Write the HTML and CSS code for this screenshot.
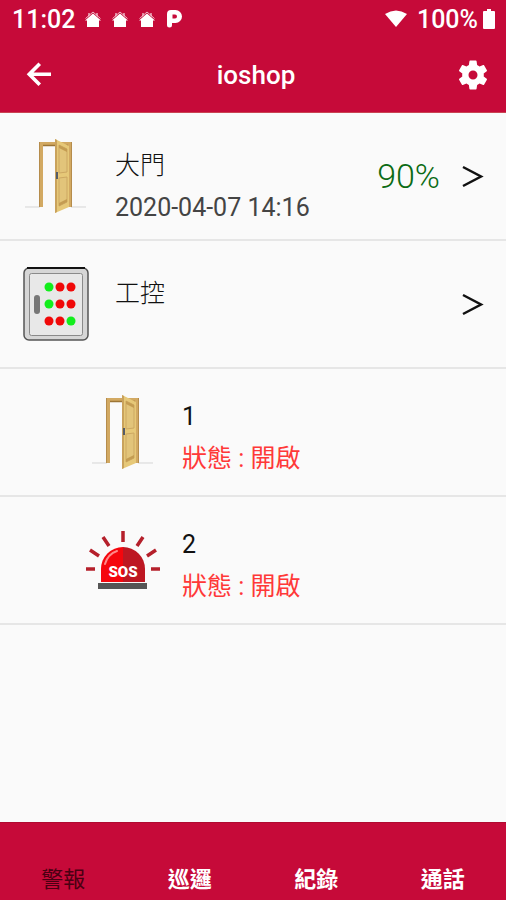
FILE: index.html
```html
<!DOCTYPE html>
<html lang="zh-Hant">
<head>
    <meta charset="UTF-8">
    <meta name="viewport" content="width=device-width, initial-scale=1.0">
    <title>ioshop</title>
    <link rel="stylesheet" href="styles.css">
</head>
<body>
    <!-- shared drawings -->
    <svg class="sprite" aria-hidden="true">
        <symbol id="house" viewBox="0 0 18 18">
            <path d="M9 3.500 17 10.500H15V17H3V10.500H1Z" fill="currentColor"/>
            <path d="M1.500 8.500 9 2 16.500 8.500" fill="none" stroke="currentColor" opacity=".7"/>
            <path d="M4 3h2v2l-2 2zM12 3h2v4l-2-2z" fill="currentColor" opacity=".5"/>
        </symbol>
        <symbol id="door" viewBox="0 0 80 80">
            <path d="M9 71H24M55 71H70" stroke="#d5d5d5"/>
            <path d="M23 6H56V71H52V10H27V71H23Z" fill="#d2a962"/>
            <path d="M23.500 6V71M55.500 6V71" stroke="#b58c4c"/>
            <path d="M27 9.500H52" stroke="#9c7535" stroke-width="1.500"/>
            <path d="M39 3 53 10V71L39 77Z" fill="#e6c878"/>
            <path d="M39 3 41 4V76L39 77Z" fill="#c9a25c"/>
            <path d="M43 9 51 13V36L43 37ZM43 42 51 41V66L43 70Z" fill="#e2c47a" stroke="#cda862"/>
            <path d="M43 9 51 13V16L43 12ZM43 70 51 66V63L43 67Z" fill="#c49c52"/>
            <rect x="40" y="36" width="2" height="7" fill="#555b66"/>
        </symbol>
        <symbol id="chevron" viewBox="0 0 24 24">
            <path d="M3 3 21 12.500 3 22" fill="none" stroke="#111" stroke-width="2.500"/>
        </symbol>
    </svg>

    <div class="status-bar">
        <span>11:02</span>
        <div class="notifications">
            <svg width="18" height="18"><use href="#house"/></svg>
            <svg width="18" height="18"><use href="#house"/></svg>
            <svg width="18" height="18"><use href="#house"/></svg>
            <svg width="18" height="18" viewBox="0 0 18 18">
                <path d="M6 0H10.500A6.500 6.500 0 0 1 10.500 13H7V15Q7 17.500 4.500 17.500T2 15V4Q2 0 6 0Z" fill="currentColor"/>
                <path d="M7.500 4.500H10a2 2 0 0 1 0 4H7.500Z" fill="#c60a39"/>
            </svg>
        </div>
        <div class="signals">
            <svg width="24" height="18" viewBox="0 0 24 18"><path d="M1 4Q12-3 23 4L12 17Z" fill="currentColor"/></svg>
            <span>100%</span>
            <svg class="battery" width="12" height="20" viewBox="0 0 12 20"><path d="M4 0H8V2H11Q12 2 12 3V19Q12 20 11 20H1Q0 20 0 19V3Q0 2 1 2H4Z" fill="currentColor"/></svg>
        </div>
    </div>

    <header class="app-bar">
        <button class="icon-btn" aria-label="返回">
            <svg width="36" height="36" viewBox="0 0 24 24"><path d="M20 11.500H6M12.500 4.500 5.500 11.500 12.500 18.500" fill="none" stroke="currentColor" stroke-width="2.400"/></svg>
        </button>
        <h1>ioshop</h1>
        <button class="icon-btn" aria-label="設定">
            <svg width="36" height="36" viewBox="0 0 24 24"><path fill="currentColor" d="M19.140 12.940c.04-.3.06-.61.06-.94 0-.32-.02-.64-.07-.94l2.030-1.580c.18-.14.23-.41.12-.61l-1.920-3.320c-.12-.22-.37-.29-.59-.22l-2.390.96c-.5-.38-1.030-.7-1.620-.94L14.400 2.810c-.04-.24-.24-.41-.48-.41h-3.840c-.24 0-.43.17-.47.41L9.250 5.350c-.59.24-1.130.57-1.620.94L5.240 5.330c-.22-.08-.47 0-.59.22L2.740 8.870c-.12.21-.08.47.12.61l2.030 1.580c-.05.3-.09.63-.09.94s.02.64.07.94l-2.030 1.580c-.18.14-.23.41-.12.61l1.920 3.320c.12.22.37.29.59.22l2.390-.96c.5.38 1.030.7 1.620.94l.36 2.540c.05.24.24.41.48.41h3.840c.24 0 .44-.17.47-.41l.36-2.540c.59-.24 1.130-.56 1.620-.94l2.390.96c.22.08.47 0 .59-.22l1.920-3.320c.12-.22.07-.47-.12-.61ZM12 15a3 3 0 1 1 0-6 3 3 0 0 1 0 6Z"/></svg>
        </button>
    </header>

    <main>
        <ul class="device-list">
            <li class="device">
                <svg class="device-icon"><use href="#door"/></svg>
                <div class="device-text">
                    <p>大門</p>
                    <p class="time">2020-04-07 14:16</p>
                </div>
                <span class="level">90%</span>
                <a class="more" href="#" aria-label="大門"><svg width="24" height="24"><use href="#chevron"/></svg></a>
            </li>
            <li class="device">
                <svg class="device-icon" viewBox="0 0 80 80">
                    <rect x="8" y="4" width="64" height="72" rx="5" fill="#d6d6d6" stroke="#555" stroke-width="1.500"/>
                    <path d="M11 4H69" stroke="#111" stroke-width="2"/>
                    <rect x="13.500" y="9.500" width="53" height="62" rx="2" fill="#e8e8e8" stroke="#8a8a8a"/>
                    <rect x="18" y="31" width="6" height="19" rx="3" fill="#777"/>
                    <g fill="#f00808">
                        <circle cx="44" cy="23" r="4.500"/>
                        <circle cx="55" cy="23" r="4.500"/>
                        <circle cx="44" cy="40" r="4.500"/>
                        <circle cx="55" cy="40" r="4.500"/>
                        <circle cx="33" cy="57" r="4.500"/>
                        <circle cx="44" cy="57" r="4.500"/>
                    </g>
                    <g fill="#12ee1c">
                        <circle cx="33" cy="23" r="4.500"/>
                        <circle cx="33" cy="40" r="4.500"/>
                        <circle cx="55" cy="57" r="4.500"/>
                    </g>
                </svg>
                <div class="device-text">
                    <p>工控</p>
                </div>
                <a class="more" href="#" aria-label="工控"><svg width="24" height="24"><use href="#chevron"/></svg></a>
            </li>
            <li class="device sub">
                <svg class="device-icon"><use href="#door"/></svg>
                <div class="device-text">
                    <p class="name">1</p>
                    <p class="alert">狀態 : 開啟</p>
                </div>
            </li>
            <li class="device sub">
                <svg class="device-icon" viewBox="0 0 80 80">
                    <path d="M40 11V22M20 17 26 26M60 17 54 26M7 30 16 36M73 30 64 36M3 49H12M68 49H77" stroke="#b5202b" stroke-width="3.500"/>
                    <path d="M18 62V49A22 22 0 0 1 40 27V62Z" fill="#f5060d"/>
                    <path d="M40 27A22 22 0 0 1 62 49V62H40Z" fill="#bd1722"/>
                    <path d="M22 44Q25 34 34 31" fill="none" stroke="#ff8a8a" stroke-width="2" stroke-linecap="round"/>
                    <rect x="15" y="63" width="49" height="6" fill="#555"/>
                    <text class="sos" x="40" y="57" text-anchor="middle">SOS</text>
                </svg>
                <div class="device-text">
                    <p class="name">2</p>
                    <p class="alert">狀態 : 開啟</p>
                </div>
            </li>
        </ul>
    </main>

    <nav class="tabs">
        <a class="active" href="#">警報</a>
        <a href="#">巡邏</a>
        <a href="#">紀錄</a>
        <a href="#">通話</a>
    </nav>
</body>
</html>
```
FILE: styles.css
```css
* {
    box-sizing: border-box;
}
body {
    display: flex;
    flex-direction: column;
    min-height: 100vh;
    margin: 0;
    font-family: Roboto, "Noto Sans CJK TC", sans-serif;
    font-size: 25px;
    color: #222;
    background-color: #fafafa;
}
.sprite {
    display: none;
}
svg {
    display: block;
    flex-shrink: 0;
}
.status-bar {
    display: flex;
    align-items: center;
    height: 38px;
    padding: 0 11px 0 12px;
    font-weight: 500;
    color: #fff;
    background-color: #c60a39;
}
.notifications {
    display: flex;
    gap: 9px;
    margin-left: 9px;
}
.signals {
    display: flex;
    align-items: center;
    margin-left: auto;
}
.signals span {
    margin: 0 5px 0 9px;
}
.app-bar {
    display: flex;
    align-items: center;
    justify-content: space-between;
    height: 75px;
    padding: 0 15px;
    color: #fff;
    background-color: #c60a39;
    border-bottom: 1px solid #c94452;
}
.app-bar h1 {
    margin: 0;
    font-size: 26px;
    font-weight: 500;
}
.icon-btn {
    padding: 0;
    border: none;
    color: inherit;
    background: none;
    cursor: pointer;
}
.icon-btn:first-child {
    padding-left: 6px;
}
main {
    flex: 1;
}
.device-list {
    margin: 0;
    padding: 0;
    list-style: none;
}
.device {
    display: flex;
    align-items: center;
    height: 128px;
    padding: 0 22px 0 16px;
    border-bottom: 2px solid #e6e6e6;
}
.device.sub {
    padding-left: 83px;
}
.device-icon {
    width: 80px;
    height: 80px;
}
.device-text {
    flex: 1;
    align-self: flex-start;
    padding-top: 32px;
    margin-left: 19px;
}
.sub .device-text {
    padding-top: 27px;
}
.device-text p {
    margin: 0;
    line-height: 42px;
    font-weight: 300;
    color: #111;
}
.device-text .name {
    font-weight: 400;
}
.device-text .time {
    font-weight: 400;
    color: #444;
}
.device-text .alert {
    font-weight: 400;
    color: #ff3838;
}
.level {
    margin-right: 20px;
    font-size: 34px;
    font-weight: 300;
    color: #0b6b14;
}
.sos {
    font-family: Roboto, sans-serif;
    font-size: 15px;
    font-weight: 900;
    fill: #fff;
}
.tabs {
    display: grid;
    grid-template-columns: repeat(4, 1fr);
    align-items: end;
    height: 78px;
    padding-bottom: 4px;
    background-color: #c60a39;
    border-top: 1px solid #b00a30;
}
.tabs a {
    font-size: 22px;
    font-weight: 700;
    line-height: 32px;
    text-align: center;
    text-decoration: none;
    color: #fff;
}
.tabs .active {
    font-weight: 400;
    color: #4a0012;
}
```
